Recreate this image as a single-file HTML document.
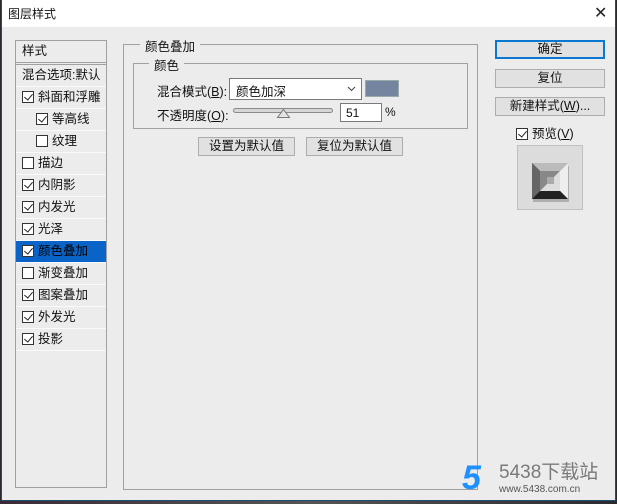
<!DOCTYPE html>
<html><head><meta charset="utf-8"><style>
*{margin:0;padding:0;box-sizing:border-box}
body{width:617px;height:504px;overflow:hidden;background:#2a2a30;font-family:"Liberation Sans","Noto Sans CJK SC","Microsoft YaHei",sans-serif;font-size:12px;color:#111;position:relative}
.dlg{position:absolute;left:1px;top:0;width:615px;height:501px;background:#ececec;border:1px solid #1d4f6e;border-top:none}
.title{position:absolute;left:0;top:0;width:613px;height:27px;background:#fff}
.title span{position:absolute;left:6px;top:5px;font-size:12px}
.x{position:absolute;left:592px;top:3px;font-size:16px;color:#222}
.a{position:absolute}
.list{left:13px;top:40px;width:92px;height:448px;border:1px solid #a0a0a0;background:#ececec}
.it{position:absolute;left:0;width:90px;height:22px;border-bottom:1px solid #fafafa;line-height:21px;white-space:nowrap;font-size:12.5px}
.cb{display:inline-block;width:12px;height:12px;border:1px solid #333;vertical-align:-2px;margin-right:4px;position:relative;background:#fff}
.cb.c::after{content:"";position:absolute;left:3px;top:0px;width:4px;height:7px;border:solid #222;border-width:0 1px 1px 0;transform:rotate(40deg)}
.sel{background:#0a64c8;color:#000}
.grp{border:1px solid #a0a0a0}
.lg{position:absolute;background:#ececec;padding:0 5px;font-size:12.5px}
.btn{position:absolute;background:#e1e1e1;border:1px solid #adadad;text-align:center;font-size:12.5px;line-height:16px}
</style></head><body>
<div class="dlg">
<div class="title"><span>图层样式</span><div class="x">✕</div></div>

<div class="a list">
<div class="it" style="top:0;padding-left:6px;border-bottom:3px double #a0a0a0;height:24px">样式</div>
<div class="it" style="top:24px;padding-left:6px">混合选项:默认</div>
<div class="it" style="top:46px;padding-left:6px"><span class="cb c"></span>斜面和浮雕</div>
<div class="it" style="top:68px;padding-left:20px"><span class="cb c"></span>等高线</div>
<div class="it" style="top:90px;padding-left:20px"><span class="cb"></span>纹理</div>
<div class="it" style="top:112px;padding-left:6px"><span class="cb"></span>描边</div>
<div class="it" style="top:134px;padding-left:6px"><span class="cb c"></span>内阴影</div>
<div class="it" style="top:156px;padding-left:6px"><span class="cb c"></span>内发光</div>
<div class="it" style="top:178px;padding-left:6px"><span class="cb c"></span>光泽</div>
<div class="it sel" style="top:200px;padding-left:6px"><span class="cb c"></span>颜色叠加</div>
<div class="it" style="top:222px;padding-left:6px"><span class="cb"></span>渐变叠加</div>
<div class="it" style="top:244px;padding-left:6px"><span class="cb c"></span>图案叠加</div>
<div class="it" style="top:266px;padding-left:6px"><span class="cb c"></span>外发光</div>
<div class="it" style="top:288px;padding-left:6px"><span class="cb c"></span>投影</div>
</div>

<div class="a grp" style="left:121px;top:44px;width:355px;height:446px"></div>
<div class="lg" style="left:138px;top:36px">颜色叠加</div>
<div class="a grp" style="left:131px;top:63px;width:335px;height:66px"></div>
<div class="lg" style="left:147px;top:55px">颜色</div>
<div class="a" style="left:155px;top:81px;font-size:12.5px">混合模式(<u>B</u>):</div>
<div class="a" style="left:227px;top:78px;width:133px;height:22px;background:#fff;border:1px solid #7a7a7a;padding:2px 0 0 6px;font-size:12.5px">颜色加深<svg style="position:absolute;right:5px;top:7px" width="9" height="6"><polyline points="1,1 4.5,4.5 8,1" fill="none" stroke="#444"/></svg></div>
<div class="a" style="left:363px;top:80px;width:34px;height:17px;background:#75849f;border:1px solid #9aa"></div>
<div class="a" style="left:155px;top:105px;font-size:12.5px">不透明度(<u>O</u>):</div>
<svg class="a" style="left:229px;top:105px" width="104" height="16"><rect x="2.5" y="3.5" width="99" height="4" rx="2" fill="#d6d6d6" stroke="#8a8a8a"/><polygon points="52.5,4.5 58.5,12.5 46.5,12.5" fill="#e4e4e4" stroke="#777"/></svg>
<div class="a" style="left:338px;top:103px;width:42px;height:19px;background:#fff;border:1px solid #7a7a7a;padding:2px 0 0 5px">51</div>
<div class="a" style="left:383px;top:105px">%</div>
<div class="btn" style="left:196px;top:137px;width:97px;height:19px">设置为默认值</div>
<div class="btn" style="left:304px;top:137px;width:97px;height:19px">复位为默认值</div>

<div class="btn" style="left:493px;top:40px;width:110px;height:19px;border:2px solid #0a78d0;line-height:15px">确定</div>
<div class="btn" style="left:493px;top:69px;width:110px;height:19px">复位</div>
<div class="btn" style="left:493px;top:97px;width:110px;height:19px">新建样式(<u>W</u>)...</div>
<div class="a" style="left:514px;top:123px;font-size:12.5px"><span class="cb c"></span>预览(<u>V</u>)</div>
<div class="a" style="left:515px;top:145px;width:66px;height:65px;background:#dcdcdc;border:1px solid #c0c0c0">
<svg width="64" height="63" viewBox="0 0 64 63"><rect x="14" y="18" width="36" height="36" fill="#444" opacity="0.3" transform="translate(1,2)"/><rect x="14" y="17" width="36" height="36" fill="#555"/><polygon points="14,17 50,17 42,25 22,25" fill="#bbb"/><polygon points="50,17 50,53 42,45 42,25" fill="#eee"/><polygon points="14,53 50,53 42,45 22,45" fill="#222"/><polygon points="14,17 22,25 22,45 14,53" fill="#666"/><rect x="22" y="25" width="20" height="20" fill="#888"/><polygon points="42,25 42,45 22,45" fill="#ddd"/><rect x="29" y="31" width="7" height="7" fill="#aaa"/></svg></div>

<div class="a" style="left:460px;top:461px;font-size:34px;font-weight:bold;color:#1e90ff;font-style:italic;line-height:34px">5</div>
<div class="a" style="left:497px;top:463px;font-size:19px;color:#7a7a7a;line-height:20px">5438下载站</div>
<div class="a" style="left:497px;top:484px;font-size:10px;color:#555">www.5438.com.cn</div>
</div>
<div class="a" style="left:0;top:501px;width:617px;height:3px;background:linear-gradient(90deg,#3a2a35,#555,#2a2a30)"></div>
</body></html>
